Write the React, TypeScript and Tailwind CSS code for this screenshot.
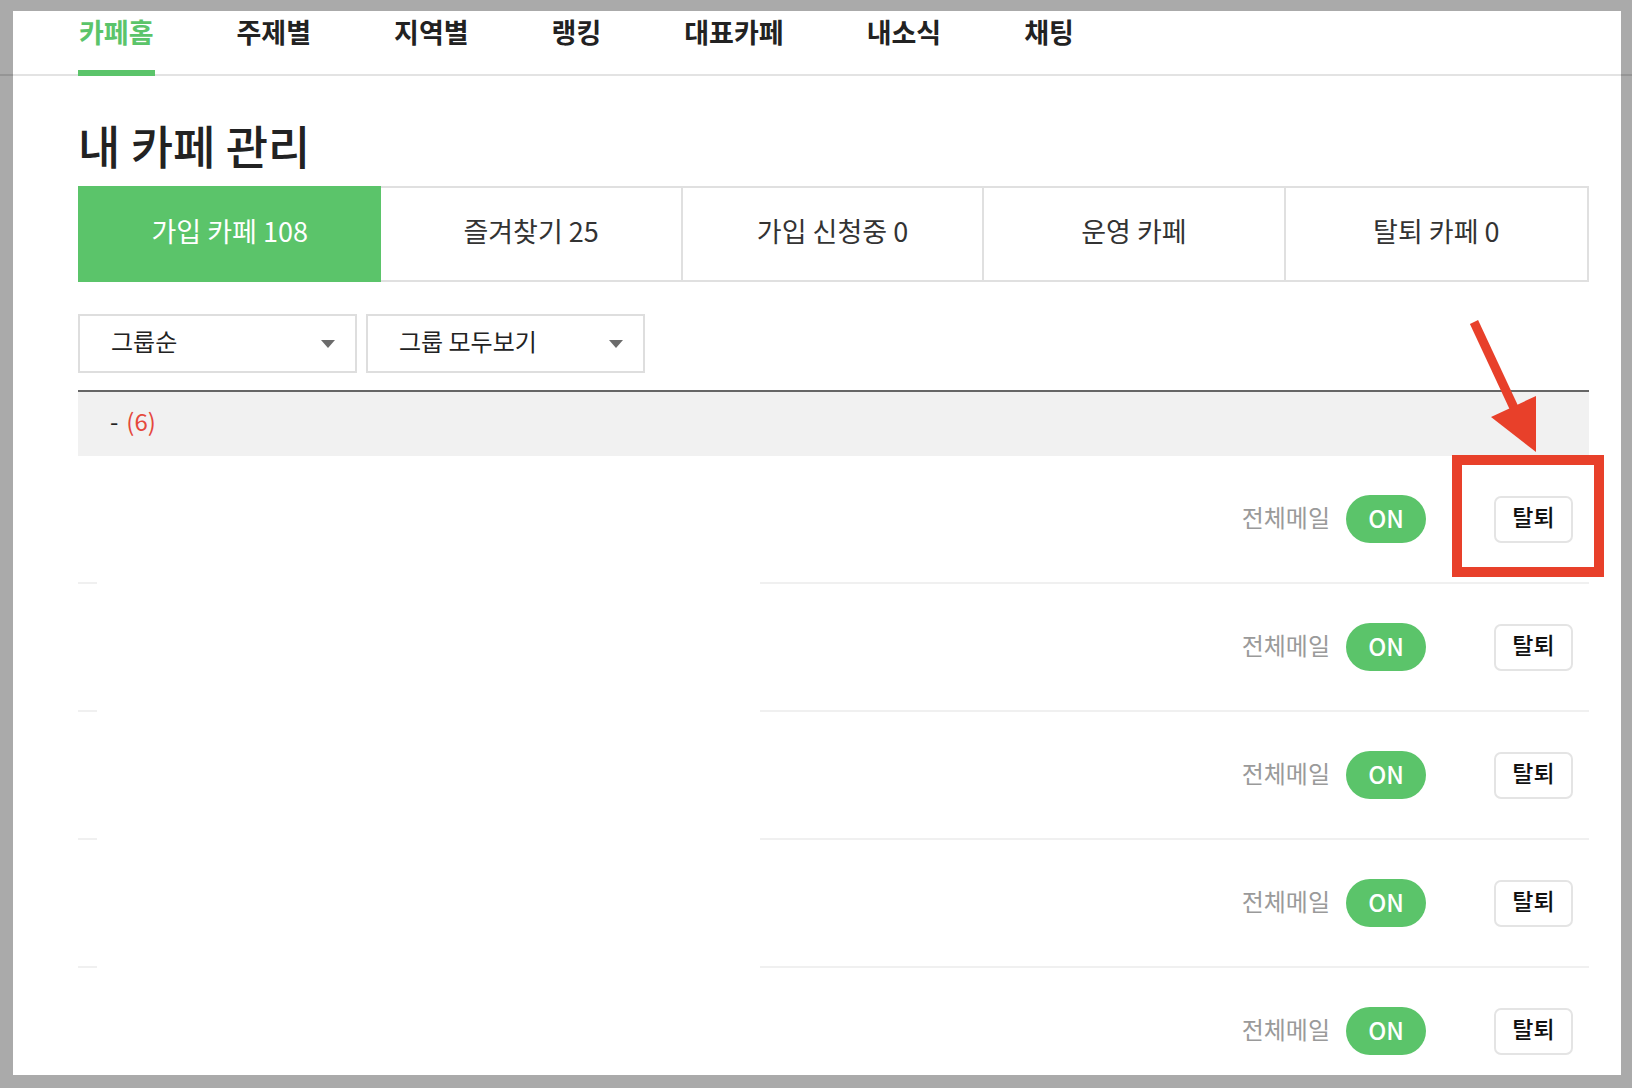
import React from 'react';

const navItems = ['카페홈', '주제별', '지역별', '랭킹', '대표카페', '내소식', '채팅'];

const tabs = [
  { label: '가입 카페 108', active: true },
  { label: '즐겨찾기 25', active: false },
  { label: '가입 신청중 0', active: false },
  { label: '운영 카페', active: false },
  { label: '탈퇴 카페 0', active: false },
];

const Caret: React.FC = () => (
  <svg width="14" height="8" viewBox="0 0 14 8" className="shrink-0">
    <polygon points="0,0 14,0 7,8" fill="#6b6b6b" />
  </svg>
);

const Select: React.FC<{ label: string }> = ({ label }) => (
  <div className="w-[279px] h-[59px] border-2 border-[#dedede] bg-white flex items-center justify-between pl-[31px] pr-[20px]">
    <span className="text-[24px] leading-[30px] text-[#222] -mt-[5px]">{label}</span>
    <Caret />
  </div>
);

const CafeRow: React.FC<{ last?: boolean }> = ({ last }) => (
  <div>
    <div className="h-[126px] flex items-center justify-end pr-[16px]">
      <span className="text-[24px] leading-[30px] text-[#9a9a9a] -mt-[4px]">전체메일</span>
      <span className="ml-[16px] w-[80px] h-[48px] rounded-full bg-[#5bc46a] text-white text-[24px] font-medium flex items-center justify-center pb-[3px]">
        ON
      </span>
      <button className="ml-[68px] w-[79px] h-[47px] border-2 border-[#e4e4e4] rounded-[7px] bg-white text-[23px] font-medium text-[#111] flex items-center justify-center pb-[5px]">
        탈퇴
      </button>
    </div>
    {!last && (
      <div className="flex h-[2px]">
        <div className="w-[19px] bg-[#f0f0f0]" />
        <div className="ml-auto w-[829px] bg-[#f0f0f0]" />
      </div>
    )}
  </div>
);

const Annotation: React.FC = () => (
  <svg
    className="absolute left-0 top-0 pointer-events-none"
    width="1632"
    height="1088"
    viewBox="0 0 1632 1088"
  >
    <rect x="1457" y="460" width="142" height="112" fill="none" stroke="#e8402a" strokeWidth="10" />
    <line x1="1474" y1="322" x2="1515" y2="410" stroke="#e8402a" strokeWidth="9" />
    <polygon points="1491,417 1536,396 1536,452" fill="#e8402a" />
  </svg>
);

export default function App() {
  return (
    <div
      className="relative w-[1632px] h-[1088px] bg-[#aaaaaa] overflow-hidden"
      style={{ fontFamily: '"Noto Sans CJK KR", "Noto Sans", sans-serif' }}
    >
      {/* nav divider seen through the frame */}
      <div className="absolute left-0 top-[74px] w-full h-[2px] bg-[#959595]" />

      <div className="absolute left-[13px] top-[11px] w-[1608px] h-[1064px] bg-white overflow-hidden">
        {/* top nav */}
        <div className="h-[65px] border-b-2 border-[#e3e3e3] flex pl-[65px] gap-[81px]">
          {navItems.map((item, i) => (
            <div
              key={item}
              className={
                i === 0
                  ? 'h-[65px] shrink-0 pt-[6px] border-b-[6px] border-[#5bc46a] px-[1px]'
                  : 'h-[65px] shrink-0 pt-[6px] px-[1px]'
              }
            >
              <span
                className={
                  i === 0
                    ? 'block text-[27px] leading-[30px] font-bold text-[#5bc46a]'
                    : 'block text-[27px] leading-[30px] font-bold text-[#222]'
                }
              >
                {item}
              </span>
            </div>
          ))}
        </div>

        <div className="pl-[65px] pr-[32px]">
          <h1 className="mt-[42px] text-[46px] leading-[52px] font-medium text-[#222]">내 카페 관리</h1>

          {/* tabs */}
          <div className="mt-[16px] grid grid-cols-5 h-[96px] border-2 border-[#e0e0e0]">
            {tabs.map((t, i) => (
              <div
                key={t.label}
                className={
                  t.active
                    ? 'bg-[#5bc46a] text-white flex items-center justify-center text-[27px] pb-[6px] -m-[2px] mr-0'
                    : i === tabs.length - 1
                      ? 'text-[#333] flex items-center justify-center text-[27px] pb-[6px]'
                      : 'text-[#333] flex items-center justify-center text-[27px] pb-[6px] border-r-2 border-[#e0e0e0]'
                }
              >
                {t.label}
              </div>
            ))}
          </div>

          {/* filters */}
          <div className="mt-[32px] flex gap-[9px]">
            <Select label="그룹순" />
            <Select label="그룹 모두보기" />
          </div>

          {/* group */}
          <div className="mt-[17px] border-t-2 border-[#666]">
            <div className="h-[64px] bg-[#f1f1f1] flex items-center pl-[32px] text-[24px] pb-[6px]">
              <span className="text-[#222]">-</span>
              <span className="ml-[8px] text-[#e5483c]">(6)</span>
            </div>
            <CafeRow />
            <CafeRow />
            <CafeRow />
            <CafeRow />
            <CafeRow last />
          </div>
        </div>
      </div>
      <Annotation />
    </div>
  );
}
